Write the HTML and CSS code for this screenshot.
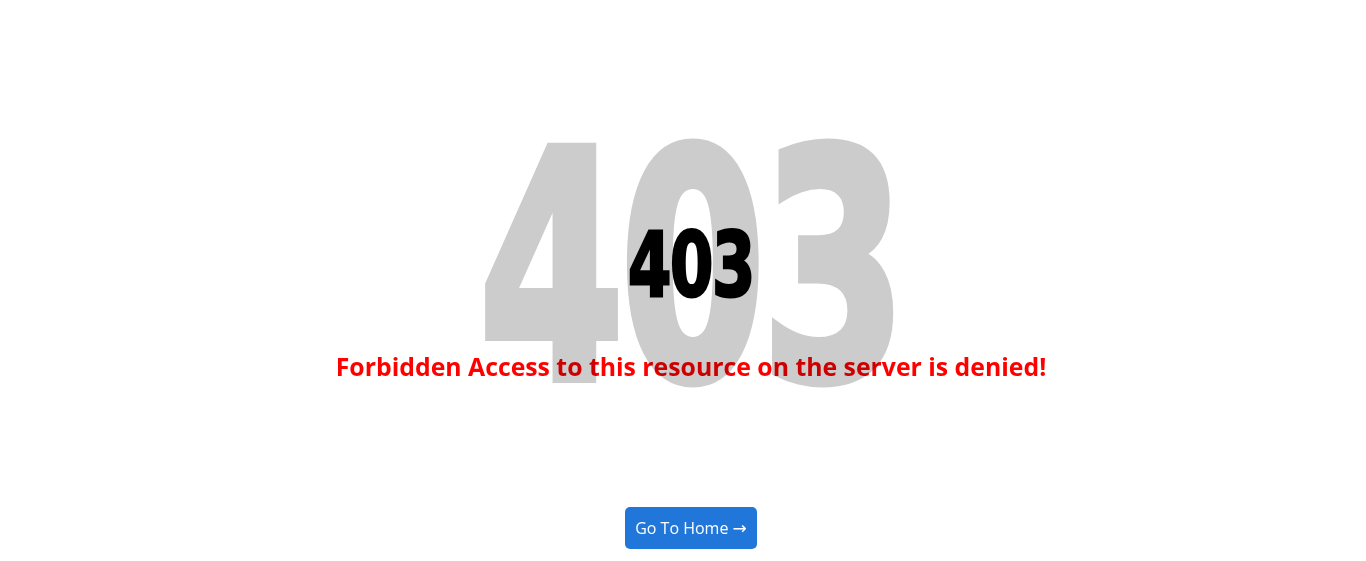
FILE: index.html
```html
<!DOCTYPE html>
<html lang="en">
<head>
<meta charset="utf-8">
<title>403 Forbidden</title>
<link rel="stylesheet" href="styles.css">
</head>
<body>
<main class="page">
  <section class="hero">
    <div class="bg-code" aria-hidden="true">403</div>
    <h1 class="code">403</h1>
    <p class="message">Forbidden Access to this resource on the server is denied!</p>
  </section>
  <a class="home-btn" href="#">Go To Home <span class="arrow">&rarr;</span></a>
</main>
</body>
</html>
```

FILE: styles.css
```css
* { box-sizing: border-box; }
html, body { margin: 0; padding: 0; background: #fff; }
body { font-family: "Open Sans", "Liberation Sans", sans-serif; }

.page {
  display: flex;
  flex-direction: column;
  align-items: center;
  padding-left: 16px;
  padding-top: 111px;
}

.hero {
  position: relative;
  display: flex;
  flex-direction: column;
  align-items: center;
  width: 100%;
}

.bg-code {
  font-family: "DejaVu Sans", sans-serif;
  font-weight: 700;
  font-size: 316px;
  line-height: 1;
  height: 316px;
  color: #ccc;
  transform: scaleX(0.66);
  -webkit-text-stroke: 10px #ccc;
  letter-spacing: -6px;
  white-space: nowrap;
}

.code {
  position: absolute;
  top: 110px;
  left: 0;
  right: 0;
  margin: 0;
  text-align: center;
  font-family: "DejaVu Sans", sans-serif;
  font-weight: 700;
  font-size: 89px;
  line-height: 1;
  color: #000;
  transform: scaleX(0.7);
  -webkit-text-stroke: 3px #000;
  letter-spacing: -2px;
}

.message {
  position: absolute;
  top: 239px;
  left: 0;
  right: 0;
  margin: 0;
  text-align: center;
  color: #ff0000;
  font-weight: 700;
  font-size: 24.8px;
  line-height: 33px;
  mix-blend-mode: multiply;
}

.home-btn {
  margin-top: 80px;
  display: inline-block;
  background: #2176d9;
  color: #fff;
  text-decoration: none;
  font-size: 16px;
  line-height: 22px;
  padding: 10px 10px;
  border-radius: 5px;
}

.arrow {
  font-family: "DejaVu Sans", sans-serif;
  font-size: 17px;
}
```
